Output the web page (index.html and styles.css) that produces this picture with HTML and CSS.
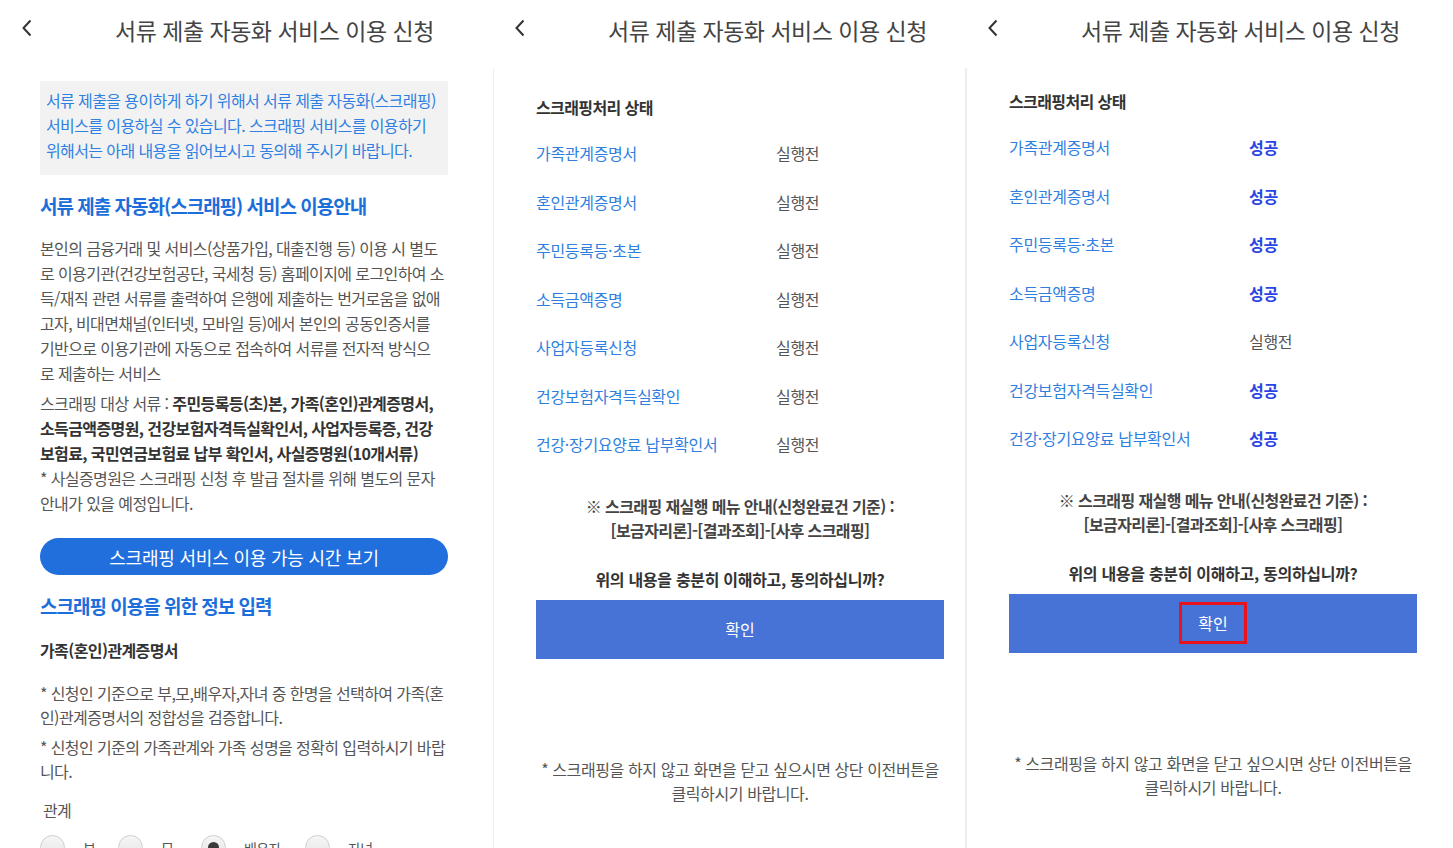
FILE: index.html
```html
<!DOCTYPE html>
<html lang="ko">
<head>
    <meta charset="UTF-8">
    <title>서류 제출 자동화 서비스 이용 신청</title>
    <link rel="stylesheet" href="styles.css">
</head>
<body>

<div class="panel panel-intro">
    <div class="header">
        <svg class="back" width="12" height="18" viewBox="0 0 12 18"><path d="M9.5 1.5 L2.5 9 L9.5 16.5" fill="none" stroke="#333" stroke-width="2"/></svg>
        <h1>서류 제출 자동화 서비스 이용 신청</h1>
    </div>
    <div class="content">
        <div class="notice-box">
            서류 제출을 용이하게 하기 위해서 서류 제출 자동화(스크래핑)<br>
            서비스를 이용하실 수 있습니다. 스크래핑 서비스를 이용하기<br>
            위해서는 아래 내용을 읽어보시고 동의해 주시기 바랍니다.
        </div>
        <h2 class="section-title first">서류 제출 자동화(스크래핑) 서비스 이용안내</h2>
        <p class="desc">
            본인의 금융거래 및 서비스(상품가입, 대출진행 등) 이용 시 별도<br>
            로 이용기관(건강보험공단, 국세청 등) 홈페이지에 로그인하여 소<br>
            득/재직 관련 서류를 출력하여 은행에 제출하는 번거로움을 없애<br>
            고자, 비대면채널(인터넷, 모바일 등)에서 본인의 공동인증서를<br>
            기반으로 이용기관에 자동으로 접속하여 서류를 전자적 방식으<br>
            로 제출하는 서비스
        </p>
        <p class="desc">
            스크래핑 대상 서류 : <b>주민등록등(초)본, 가족(혼인)관계증명서,<br>
            소득금액증명원, 건강보험자격득실확인서, 사업자등록증, 건강<br>
            보험료, 국민연금보험료 납부 확인서, 사실증명원(10개서류)</b><br>
            * 사실증명원은 스크래핑 신청 후 발급 절차를 위해 별도의 문자<br>
            안내가 있을 예정입니다.
        </p>
        <button type="button" class="pill-btn">스크래핑 서비스 이용 가능 시간 보기</button>
        <h2 class="section-title">스크래핑 이용을 위한 정보 입력</h2>
        <h3 class="doc-title">가족(혼인)관계증명서</h3>
        <p class="guide">* 신청인 기준으로 부,모,배우자,자녀 중 한명을 선택하여 가족(혼<br>인)관계증명서의 정합성을 검증합니다.</p>
        <p class="guide">* 신청인 기준의 가족관계와 가족 성명을 정확히 입력하시기 바랍<br>니다.</p>
        <div class="field-label">관계</div>
        <div class="radio-row">
            <label class="radio r-1"><span class="dot"></span>부</label>
            <label class="radio r-2"><span class="dot"></span>모</label>
            <label class="radio r-3"><span class="dot checked"></span>배우자</label>
            <label class="radio r-4"><span class="dot"></span>자녀</label>
        </div>
    </div>
</div>

<div class="panel panel-status">
    <div class="header">
        <svg class="back" width="12" height="18" viewBox="0 0 12 18"><path d="M9.5 1.5 L2.5 9 L9.5 16.5" fill="none" stroke="#333" stroke-width="2"/></svg>
        <h1>서류 제출 자동화 서비스 이용 신청</h1>
    </div>
    <div class="content boxed">
        <h3 class="status-title">스크래핑처리 상태</h3>
        <div class="status-list">
            <div class="status-row"><a>가족관계증명서</a><span class="state">실행전</span></div>
            <div class="status-row"><a>혼인관계증명서</a><span class="state">실행전</span></div>
            <div class="status-row"><a>주민등록등·초본</a><span class="state">실행전</span></div>
            <div class="status-row"><a>소득금액증명</a><span class="state">실행전</span></div>
            <div class="status-row"><a>사업자등록신청</a><span class="state">실행전</span></div>
            <div class="status-row"><a>건강보험자격득실확인</a><span class="state">실행전</span></div>
            <div class="status-row"><a>건강·장기요양료 납부확인서</a><span class="state">실행전</span></div>
        </div>
        <p class="rerun">※ 스크래핑 재실행 메뉴 안내(신청완료건 기준) :<br>[보금자리론]-[결과조회]-[사후 스크래핑]</p>
        <p class="question">위의 내용을 충분히 이해하고, 동의하십니까?</p>
        <button type="button" class="confirm-btn">확인</button>
        <p class="footnote">* 스크래핑을 하지 않고 화면을 닫고 싶으시면 상단 이전버튼을<br>클릭하시기 바랍니다.</p>
    </div>
</div>

<div class="panel panel-status panel-done">
    <div class="header">
        <svg class="back" width="12" height="18" viewBox="0 0 12 18"><path d="M9.5 1.5 L2.5 9 L9.5 16.5" fill="none" stroke="#333" stroke-width="2"/></svg>
        <h1>서류 제출 자동화 서비스 이용 신청</h1>
    </div>
    <div class="content boxed">
        <h3 class="status-title">스크래핑처리 상태</h3>
        <div class="status-list">
            <div class="status-row"><a>가족관계증명서</a><span class="state ok">성공</span></div>
            <div class="status-row"><a>혼인관계증명서</a><span class="state ok">성공</span></div>
            <div class="status-row"><a>주민등록등·초본</a><span class="state ok">성공</span></div>
            <div class="status-row"><a>소득금액증명</a><span class="state ok">성공</span></div>
            <div class="status-row"><a>사업자등록신청</a><span class="state">실행전</span></div>
            <div class="status-row"><a>건강보험자격득실확인</a><span class="state ok">성공</span></div>
            <div class="status-row"><a>건강·장기요양료 납부확인서</a><span class="state ok">성공</span></div>
        </div>
        <p class="rerun">※ 스크래핑 재실행 메뉴 안내(신청완료건 기준) :<br>[보금자리론]-[결과조회]-[사후 스크래핑]</p>
        <p class="question">위의 내용을 충분히 이해하고, 동의하십니까?</p>
        <button type="button" class="confirm-btn"><span class="highlight">확인</span></button>
        <p class="footnote">* 스크래핑을 하지 않고 화면을 닫고 싶으시면 상단 이전버튼을<br>클릭하시기 바랍니다.</p>
    </div>
</div>

</body>
</html>
```

FILE: styles.css
```css
body {
    margin: 0;
    display: flex;
    height: 848px;
    overflow: hidden;
    background: #fff;
    font-family: "Noto Sans CJK KR", "Noto Sans", sans-serif;
    color: #555;
    letter-spacing: -0.6px;
}
.panel {
    flex: none;
    display: flex;
    flex-direction: column;
}
.panel-intro {
    width: 493px;
}
.panel-status {
    width: 473px;
}
.panel-done {
    width: 487px;
}
.header {
    flex: none;
    height: 68px;
    display: flex;
    align-items: flex-start;
    padding-left: 21px;
    box-sizing: border-box;
}
.header .back {
    margin-top: 19px;
}
.header h1 {
    margin: 13px 0 0 82px;
    font-size: 23px;
    line-height: 34px;
    font-weight: 400;
    color: #444;
    letter-spacing: -0.5px;
    white-space: nowrap;
}
.content {
    flex: 1;
    padding: 0 21px 0 42px;
}
.panel-intro .content {
    padding: 13px 45px 0 40px;
}
.content.boxed {
    border-left: 1px solid #eeeeee;
    padding-top: 27px;
}
.panel-status:not(.panel-done) .content.boxed {
    border-right: 1px solid #eeeeee;
}
.panel-done .content.boxed {
    padding-top: 21px;
    padding-right: 36px;
}
p, h2, h3 {
    margin: 0;
}
.notice-box {
    background: #f2f2f2;
    color: #2f80e2;
    font-size: 16px;
    line-height: 25px;
    padding: 7px 6px 12px;
    white-space: nowrap;
}
.section-title {
    font-size: 19px;
    line-height: 25px;
    color: #1c6edb;
    font-weight: 700;
    margin-top: 18px;
    letter-spacing: -1px;
    white-space: nowrap;
}
.desc {
    font-size: 16px;
    line-height: 25px;
    margin-top: 5px;
    white-space: nowrap;
}
.section-title.first + .desc {
    margin-top: 18px;
}
.desc b {
    color: #333;
}
.pill-btn {
    display: block;
    width: 100%;
    height: 37px;
    margin-top: 22px;
    border: none;
    border-radius: 19px;
    background: #206fdd;
    color: #fff;
    font-family: inherit;
    font-size: 18px;
    letter-spacing: -0.2px;
    padding: 0;
}
.pill-btn + .section-title {
    margin-top: 18px;
}
.doc-title {
    font-size: 16px;
    line-height: 25px;
    color: #333;
    margin-top: 20px;
}
.guide {
    font-size: 16px;
    line-height: 24px;
    margin-top: 6px;
    white-space: nowrap;
}
.doc-title + .guide {
    margin-top: 18px;
}
.field-label {
    font-size: 16px;
    line-height: 24px;
    margin: 15px 0 0 3px;
}
.radio-row {
    display: flex;
    margin-top: 13px;
    font-size: 14px;
    color: #555;
}
.radio {
    display: flex;
    align-items: center;
    gap: 18px;
}
.r-1 { width: 78px; }
.r-2 { width: 83px; }
.r-3 { width: 104px; }
.dot {
    width: 25px;
    height: 25px;
    border-radius: 50%;
    box-sizing: border-box;
    border: 1px solid #cfcfcf;
    background: linear-gradient(#f6f6f6, #e4e4e4);
    position: relative;
}
.dot.checked::after {
    content: "";
    position: absolute;
    left: 6px;
    top: 6px;
    width: 11px;
    height: 11px;
    border-radius: 50%;
    background: #3a3a3a;
}
.status-title {
    font-size: 16px;
    line-height: 24px;
    color: #333;
}
.status-list {
    margin-top: 10px;
}
.status-row {
    display: grid;
    grid-template-columns: 240px 1fr;
    align-items: center;
    height: 48.5px;
    font-size: 16px;
    letter-spacing: -0.3px;
}
.status-row a {
    color: #2f7fe1;
    white-space: nowrap;
}
.state {
    color: #555;
}
.state.ok {
    color: #2844e4;
    font-weight: 700;
}
.rerun {
    margin-top: 25px;
    text-align: center;
    font-size: 16px;
    line-height: 24px;
    font-weight: 700;
    color: #444;
    white-space: nowrap;
}
.question {
    margin-top: 25px;
    text-align: center;
    font-size: 16px;
    line-height: 24px;
    font-weight: 700;
    color: #333;
    letter-spacing: -0.3px;
}
.confirm-btn {
    display: flex;
    align-items: center;
    justify-content: center;
    width: 408px;
    height: 59px;
    margin-top: 9px;
    border: none;
    background: #4873d6;
    color: #fff;
    font-family: inherit;
    font-size: 16px;
    padding: 0;
}
.highlight {
    padding: 6px 16px;
    border: 3px solid #e8131c;
    line-height: 24px;
}
.footnote {
    margin-top: 98px;
    text-align: center;
    font-size: 16px;
    line-height: 24px;
    letter-spacing: -0.4px;
    white-space: nowrap;
}
```
